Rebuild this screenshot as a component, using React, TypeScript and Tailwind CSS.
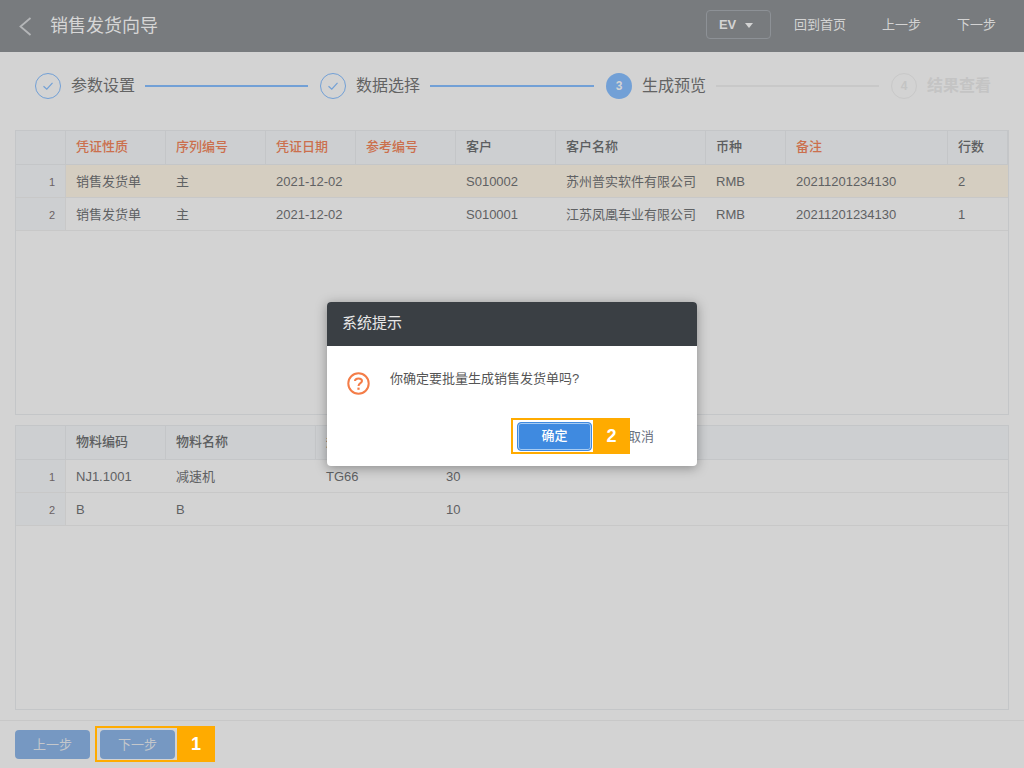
const font = { fontFamily: '"Liberation Sans", "Noto Sans CJK SC", sans-serif' };

const orderCols = [
  { title: '凭证性质', width: 'w-[100px]', required: true },
  { title: '序列编号', width: 'w-[100px]', required: true },
  { title: '凭证日期', width: 'w-[90px]', required: true },
  { title: '参考编号', width: 'w-[100px]', required: true },
  { title: '客户', width: 'w-[100px]' },
  { title: '客户名称', width: 'w-[150px]' },
  { title: '币种', width: 'w-[80px]' },
  { title: '备注', width: 'w-[162px]', required: true },
  { title: '行数', width: 'w-[60px]' },
];

const orderRows = [
  ['销售发货单', '主', '2021-12-02', '', 'S010002', '苏州普实软件有限公司', 'RMB', '20211201234130', '2'],
  ['销售发货单', '主', '2021-12-02', '', 'S010001', '江苏凤凰车业有限公司', 'RMB', '20211201234130', '1'],
];

const itemCols = [
  { title: '物料编码', width: 'w-[100px]' },
  { title: '物料名称', width: 'w-[150px]' },
  { title: '规格型号', width: 'w-[120px]' },
  { title: '数量', width: 'w-[120px]' },
];

const itemRows = [
  ['NJ1.1001', '减速机', 'TG66', '30'],
  ['B', 'B', '', '10'],
];

type Col = { title: string; width: string; required?: boolean };

function DataGrid({ cols, rows, activeRow, className }: { cols: Col[]; rows: string[][]; activeRow?: number; className: string }) {
  return (
    <div className={`border border-[#c4c6c8] text-[13px] ${className}`}>
      <div className="flex h-[34px] border-b border-[#c4c6c8] bg-[#cdcfd1]">
        <div className="w-[50px] shrink-0 border-r border-[#c4c6c8]" />
        {cols.map((col) => (
          <div
            key={col.title}
            className={`${col.width} shrink-0 border-r border-[#c4c6c8] px-[10px] leading-[31px] font-medium ${col.required ? 'text-[#cb6f4d]' : 'text-[#5c5e60]'}`}
          >
            {col.title}
          </div>
        ))}
      </div>
      {rows.map((row, i) => (
        <div key={i} className={`flex h-[33px] border-b border-[#c8c8c8] ${activeRow === i ? 'bg-[#d5cec1]' : ''}`}>
          <div className="w-[50px] shrink-0 border-r border-[#c8c8c8] bg-[#cdcfd1] pr-[10px] text-right text-[11px] leading-[34px] text-[#6b6264]">
            {i + 1}
          </div>
          {cols.map((col, j) => (
            <div key={col.title} className={`${col.width} shrink-0 overflow-hidden px-[10px] leading-[34px] whitespace-nowrap text-[#5f6163]`}>
              {row[j]}
            </div>
          ))}
        </div>
      ))}
    </div>
  );
}

function DoneStep({ label, lineWidth }: { label: string; lineWidth: string }) {
  return (
    <>
      <div className="flex h-[26px] w-[26px] shrink-0 items-center justify-center rounded-full border border-[#72a0d6]">
        <svg width="14" height="14" viewBox="0 0 14 14" fill="none" stroke="#72a0d6" strokeWidth="1.2">
          <path d="M2.5 7.2 L5.8 10.2 L11.5 3.8" />
        </svg>
      </div>
      <span className="ml-[10px] shrink-0 text-[#636363]">{label}</span>
      <div className={`mr-[12px] ml-[10px] h-[2px] bg-[#72a0d6] ${lineWidth}`} />
    </>
  );
}

function Marker({ n, width }: { n: number; width: string }) {
  return <span className={`relative z-10 flex items-center justify-center bg-[#ffab00] text-[18px] font-bold text-white ${width}`}>{n}</span>;
}

export default function App() {
  return (
    <div className="relative flex h-[768px] w-[1024px] flex-col overflow-hidden bg-[#d3d3d3]" style={font}>
      <header className="flex h-[52px] shrink-0 items-center bg-[#787b7e] pr-[28px] pl-[18px]">
        <svg width="16" height="20" viewBox="0 0 16 20" fill="none" stroke="#b4b6b8" strokeWidth="1.8">
          <path d="M12.5 2 L2.5 10.5 L12.5 19" />
        </svg>
        <h1 className="ml-[16px] text-[18px] text-[#d6d6d6]">销售发货向导</h1>
        <div className="ml-auto flex items-center pb-[3px] text-[13px] text-[#d3d3d3]">
          <div className="flex h-[29px] w-[65px] items-center gap-[9px] rounded-[4px] border border-[#8d9196] pl-[12px] font-bold">
            EV
            <span className="mt-[1px] h-0 w-0 border-x-[4.5px] border-t-[5px] border-x-transparent border-t-[#d3d3d3]" />
          </div>
          <span className="ml-[23px]">回到首页</span>
          <span className="ml-[36px]">上一步</span>
          <span className="ml-[36px]">下一步</span>
        </div>
      </header>

      <div className="mb-[10px] flex h-[68px] shrink-0 items-center pl-[35px] text-[16px]">
        <DoneStep label="参数设置" lineWidth="w-[163px]" />
        <DoneStep label="数据选择" lineWidth="w-[164px]" />
        <div className="flex h-[26px] w-[26px] shrink-0 items-center justify-center rounded-full bg-[#72a0d6] text-[12px] font-bold text-[#d3d3d3]">3</div>
        <span className="ml-[10px] shrink-0 text-[#636363]">生成预览</span>
        <div className="mr-[12px] ml-[10px] h-[2px] w-[163px] bg-[#c8c8c8]" />
        <div className="flex h-[26px] w-[26px] shrink-0 items-center justify-center rounded-full border border-[#c8c8c8] text-[12px] font-bold text-[#c4c4c4]">4</div>
        <span className="ml-[10px] shrink-0 font-bold text-[#c4c4c4]">结果查看</span>
      </div>

      <main className="flex flex-1 flex-col gap-[10px] px-[15px]">
        <DataGrid cols={orderCols} rows={orderRows} activeRow={0} className="h-[285px]" />
        <DataGrid cols={itemCols} rows={itemRows} className="h-[285px]" />
      </main>

      <footer className="mt-[10px] flex h-[48px] shrink-0 items-center gap-[10px] border-t border-[#c8c8c8] px-[15px] text-[13px] text-[#c4c7cb]">
        <button className="h-[29px] w-[75px] rounded-[4px] bg-[#7698c2]">上一步</button>
        <button className="h-[29px] w-[75px] rounded-[4px] bg-[#7698c2]">下一步</button>
      </footer>

      {/* 引导标记 1 */}
      <div className="absolute top-[726px] left-[95px] flex h-[36px]">
        <div className="w-[82px] border-y-2 border-l-2 border-[#ffab00]" />
        <Marker n={1} width="w-[38px]" />
      </div>

      {/* 系统提示弹窗 */}
      <div className="absolute top-[302px] left-[327px] h-[164px] w-[370px] overflow-hidden rounded-[4px] bg-white shadow-[0_2px_12px_rgba(0,0,0,0.35)]">
        <div className="flex h-[44px] items-center bg-[#3a3f44] px-[15px] pb-[2px] text-[15px] text-[#e8e8e8]">系统提示</div>
        <div className="flex items-start pt-[25px] pl-[20px]">
          <svg width="23" height="23" viewBox="0 0 23 23" fill="none" className="mt-[1px]">
            <circle cx="11.5" cy="11.5" r="10.2" stroke="#f47d48" strokeWidth="2" />
            <path d="M8 9 C8 5.6 15 5.6 15 9 C15 11.2 11.5 11.2 11.5 14" stroke="#f47d48" strokeWidth="2" />
            <rect x="10.4" y="15.6" width="2.2" height="2.2" fill="#f47d48" />
          </svg>
          <p className="mt-[-2px] ml-[20px] text-[13px] leading-[20px] text-[#555]">你确定要批量生成销售发货单吗?</p>
        </div>
        <div className="absolute top-[116px] left-[184px] flex h-[36px]">
          <div className="flex w-[82px] items-center justify-end border-y-2 border-l-2 border-[#ffab00] bg-white pr-[1px]">
            <button className="h-[29px] w-[75px] rounded-[4px] border border-[#3f8ae0] bg-[#3f8ae0] text-[13px] font-medium text-white shadow-[inset_0_0_0_1px_#a8ccf2]">确定</button>
          </div>
          <Marker n={2} width="w-[37px]" />
          <span className="ml-[-2px] text-[13px] leading-[37px] text-[#6b7280]">取消</span>
        </div>
      </div>
    </div>
  );
}
